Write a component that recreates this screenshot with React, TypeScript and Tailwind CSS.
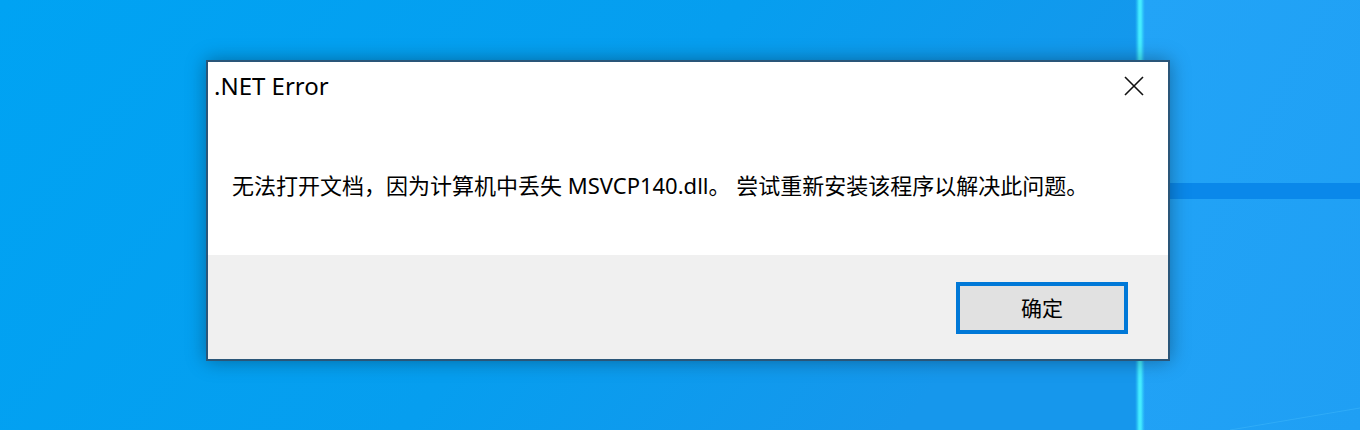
import React from 'react';

const Wallpaper: React.FC = () => (
  <svg className="absolute inset-0" width="1360" height="430" viewBox="0 0 1360 430">
    <defs>
      <linearGradient id="left" x1="0" y1="0" x2="1" y2="0.3">
        <stop offset="0" stopColor="#00a3f3" />
        <stop offset="0.6" stopColor="#069eef" />
        <stop offset="1" stopColor="#1697ec" />
      </linearGradient>
      <linearGradient id="right" x1="0" y1="0" x2="1" y2="1">
        <stop offset="0" stopColor="#22a4f7" />
        <stop offset="1" stopColor="#1f9ff4" />
      </linearGradient>
      <linearGradient id="glow" x1="0" y1="0" x2="1" y2="0">
        <stop offset="0" stopColor="#2fd0fa" stopOpacity="0" />
        <stop offset="0.4" stopColor="#44ecff" />
        <stop offset="0.6" stopColor="#44ecff" />
        <stop offset="1" stopColor="#2fd0fa" stopOpacity="0" />
      </linearGradient>
    </defs>
    <rect x="0" y="0" width="1140" height="430" fill="url(#left)" />
    <rect x="1140" y="0" width="220" height="430" fill="url(#right)" />
    <rect x="1142" y="183" width="218" height="16" fill="#0a88ea" />
    <rect x="1135" y="0" width="10" height="430" fill="url(#glow)" />
    <line x1="1230" y1="430" x2="1360" y2="408" stroke="#3ab4fa" strokeWidth="1" opacity="0.6" />
  </svg>
);

const CloseIcon: React.FC = () => (
  <svg width="20" height="20" viewBox="0 0 20 20">
    <path d="M1 1 L19 19 M19 1 L1 19" stroke="#111" strokeWidth="1.6" fill="none" />
  </svg>
);

const App: React.FC = () => {
  return (
    <div className="relative w-[1360px] h-[430px] overflow-hidden pt-[60px] pl-[206px]">
      <Wallpaper />

      {/* Dialog */}
      <div className="relative w-[964px] h-[301px] border-2 border-[#2a5679] bg-white flex flex-col shadow-[0_0_18px_rgba(0,0,0,0.35)]">
        <div className="flex-1 flex flex-col">
          <div className="h-[48px] flex items-center justify-between pl-[6px] pr-[24px]">
            <span
              className="text-[24px] leading-[30px] text-black"
              style={{ fontFamily: '"Noto Sans", "Liberation Sans", sans-serif' }}
            >
              .NET Error
            </span>
            <CloseIcon />
          </div>
          <p
            className="mt-[60px] pl-[24px] text-[22px] leading-[30px] text-black whitespace-nowrap"
            style={{ fontFamily: '"Noto Sans", "Noto Sans CJK SC", sans-serif' }}
          >
            无法打开文档，因为计算机中丢失 MSVCP140.dll。 尝试重新安装该程序以解决此问题。
          </p>
        </div>

        {/* Footer */}
        <div className="h-[104px] bg-[#f0f0f0] flex justify-end items-start pt-[27px] pr-[40px]">
          <button
            className="w-[172px] h-[52px] border-4 border-[#0078d7] bg-[#e1e1e1] text-[21px] text-black"
            style={{ fontFamily: '"Noto Sans CJK SC", sans-serif' }}
          >
            确定
          </button>
        </div>
      </div>
    </div>
  );
};

export default App;
